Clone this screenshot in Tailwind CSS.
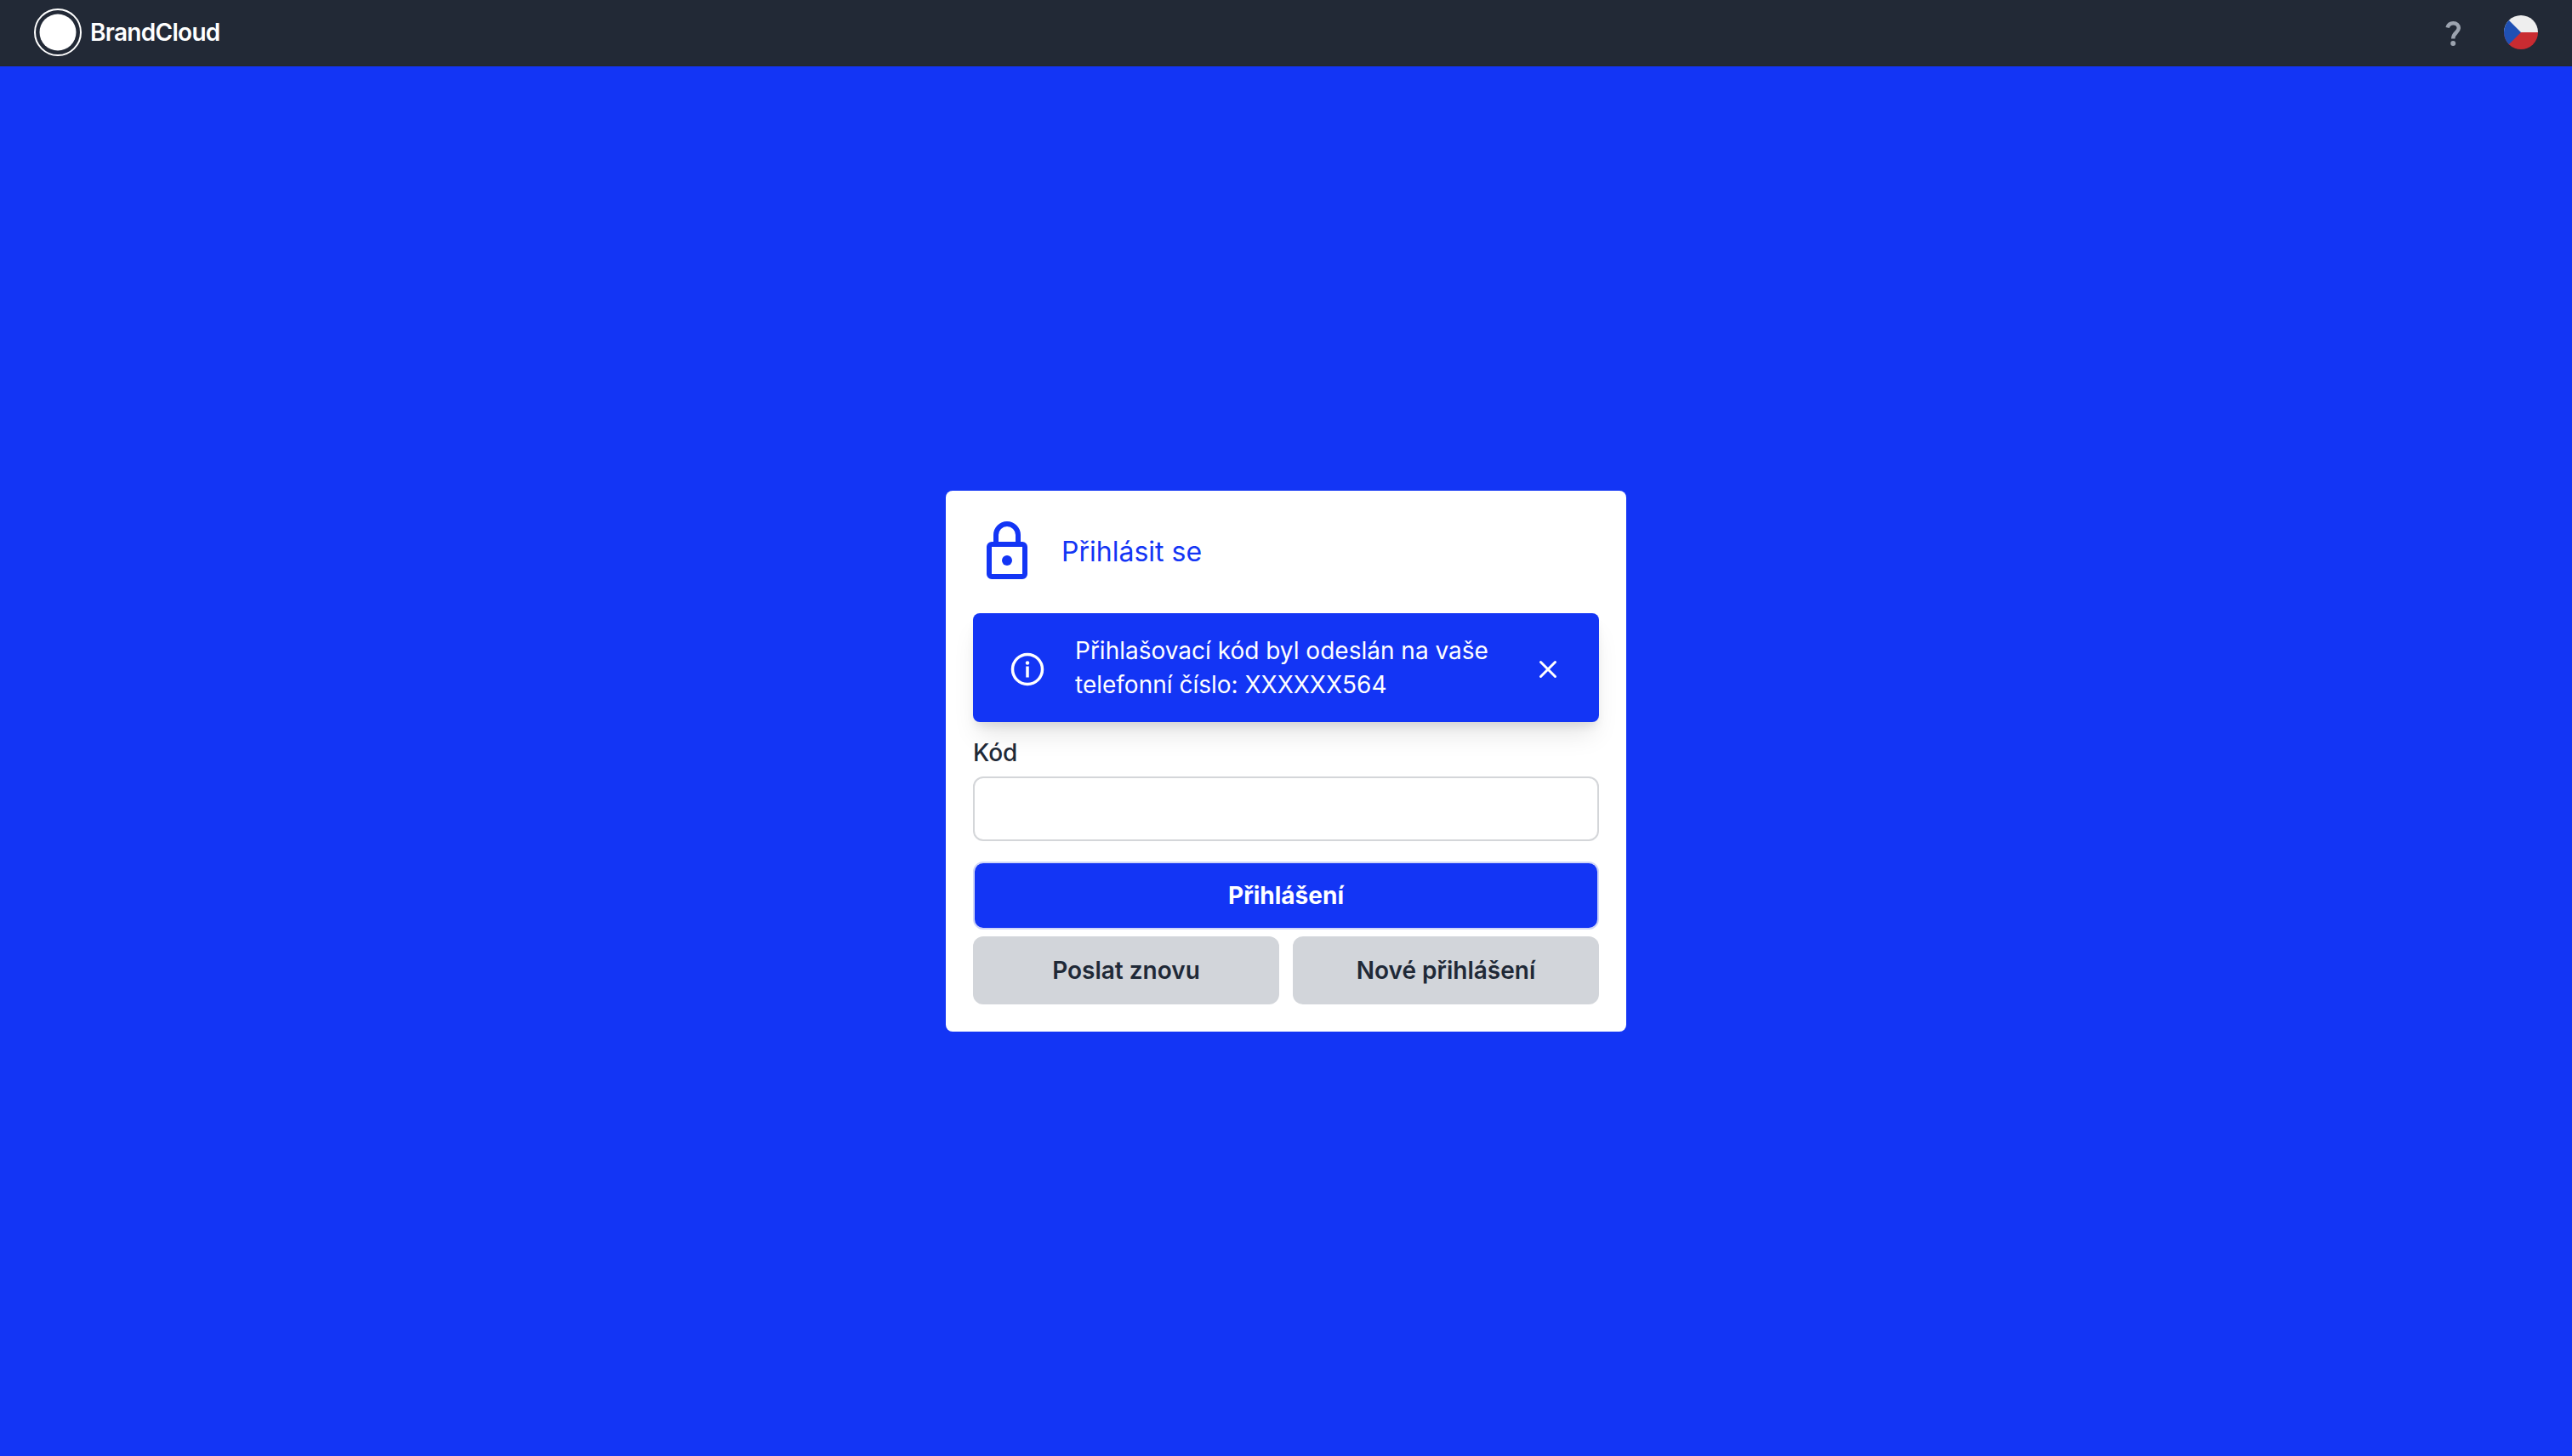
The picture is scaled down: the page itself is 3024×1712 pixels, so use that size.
<!DOCTYPE html>
<html lang="cs">
<head>
    <meta charset="UTF-8">
    <meta name="viewport" content="width=device-width, initial-scale=1.0">
    <title>BrandCloud - Přihlásit se</title>
    <script src="https://cdn.jsdelivr.net/npm/@tailwindcss/browser@4"></script>
</head>
<body class="flex min-h-screen flex-col bg-[#1335f5] font-['Inter',sans-serif] text-[28px] leading-10 text-[#1f2937]">
    <header class="flex h-[78px] items-center justify-between border-b-2 border-[#23282f] bg-[#222936] px-10">
        <a href="#" class="flex items-center gap-2.5 text-[28px] font-semibold tracking-tight text-white">
            <svg class="size-14" viewBox="0 0 56 56" fill="none">
                <circle cx="28" cy="28" r="27" stroke="white" stroke-width="2" />
                <circle cx="28" cy="28" r="21.5" fill="white" />
            </svg>
            BrandCloud
        </a>
        <div class="flex items-center gap-10">
            <button type="button" aria-label="Nápověda" class="text-[#9ca3af]">
                <svg class="size-10" viewBox="0 0 40 40" fill="none">
                    <path d="M13.600 14.500C14.500 11 17 9.200 20.400 9.200c3.800 0 6.400 2.400 6.400 5.800C26.800 20 20.200 20.500 20.200 27.500" stroke="currentColor" stroke-width="4.500" />
                    <circle cx="20.200" cy="33" r="3" fill="currentColor" />
                </svg>
            </button>
            <button type="button" aria-label="Čeština">
                <svg class="size-10" viewBox="0 0 40 40">
                    <clipPath id="flag"><circle cx="20" cy="20" r="20" /></clipPath>
                    <g clip-path="url(#flag)">
                        <path fill="#eeeeee" d="M0 0h40v20H0z" />
                        <path fill="#c92b31" d="M0 20h40v20H0z" />
                        <path fill="#1f50b4" d="M0 0l20 20L0 40z" />
                    </g>
                </svg>
            </button>
        </div>
    </header>

    <main class="flex flex-1 items-center justify-center">
        <!-- Login card -->
        <form class="flex w-full max-w-[800px] flex-col rounded-lg bg-white p-8">
            <div class="mb-9 flex items-center gap-7 px-1 pt-1 text-[#1335f5]">
                <svg class="size-[72px]" viewBox="0 0 72 72" fill="none" stroke="currentColor" stroke-width="6">
                    <path d="M23 26V16a13 13 0 0 1 26 0v10" />
                    <path fill="currentColor" stroke="none" fill-rule="evenodd" d="M18 24h36a6 6 0 0 1 6 6v32a6 6 0 0 1-6 6H18a6 6 0 0 1-6-6V30a6 6 0 0 1 6-6zm0 6v32h36V30z" />
                    <circle cx="36" cy="46" r="6" fill="currentColor" stroke="none" />
                </svg>
                <h1 class="text-[32px]">Přihlásit se</h1>
            </div>

            <!-- Info alert -->
            <div role="alert" class="mb-4 flex items-center gap-8 rounded-lg bg-[#1335f5] px-10 py-6 text-white shadow-[0_20px_30px_-6px_rgba(0,0,0,0.1),0_8px_12px_-4px_rgba(0,0,0,0.1)]">
                <svg class="size-12 shrink-0" viewBox="0 0 48 48" fill="none" stroke="currentColor" stroke-width="3.500">
                    <circle cx="24" cy="26" r="17.500" />
                    <path d="M24 22.500v13" />
                    <circle cx="24" cy="18.500" r="2.200" fill="currentColor" stroke="none" />
                </svg>
                <p class="flex-1">Přihlašovací kód byl odeslán na vaše telefonní číslo: XXXXXX564</p>
                <button type="button" aria-label="Zavřít" class="shrink-0">
                    <svg class="size-10" viewBox="0 0 40 40" fill="none" stroke="currentColor" stroke-width="3">
                        <path d="M11.500 13.500l17 17M28.500 13.500l-17 17" stroke-linecap="round" />
                    </svg>
                </button>
            </div>

            <label for="code" class="mb-2 font-medium">Kód</label>
            <input id="code" type="text" class="mb-6 h-[76px] rounded-xl border-2 border-[#d4d6d9] bg-white px-6">

            <button type="submit" class="mb-2 h-20 rounded-xl border-2 border-[#d0d6f8] bg-[#1335f5] font-bold text-white">Přihlášení</button>
            <div class="grid grid-cols-2 gap-4">
                <button type="button" class="h-20 rounded-xl bg-[#d2d5da] font-semibold">Poslat znovu</button>
                <button type="button" class="h-20 rounded-xl bg-[#d2d5da] font-semibold">Nové přihlášení</button>
            </div>
        </form>
    </main>
</body>
</html>
